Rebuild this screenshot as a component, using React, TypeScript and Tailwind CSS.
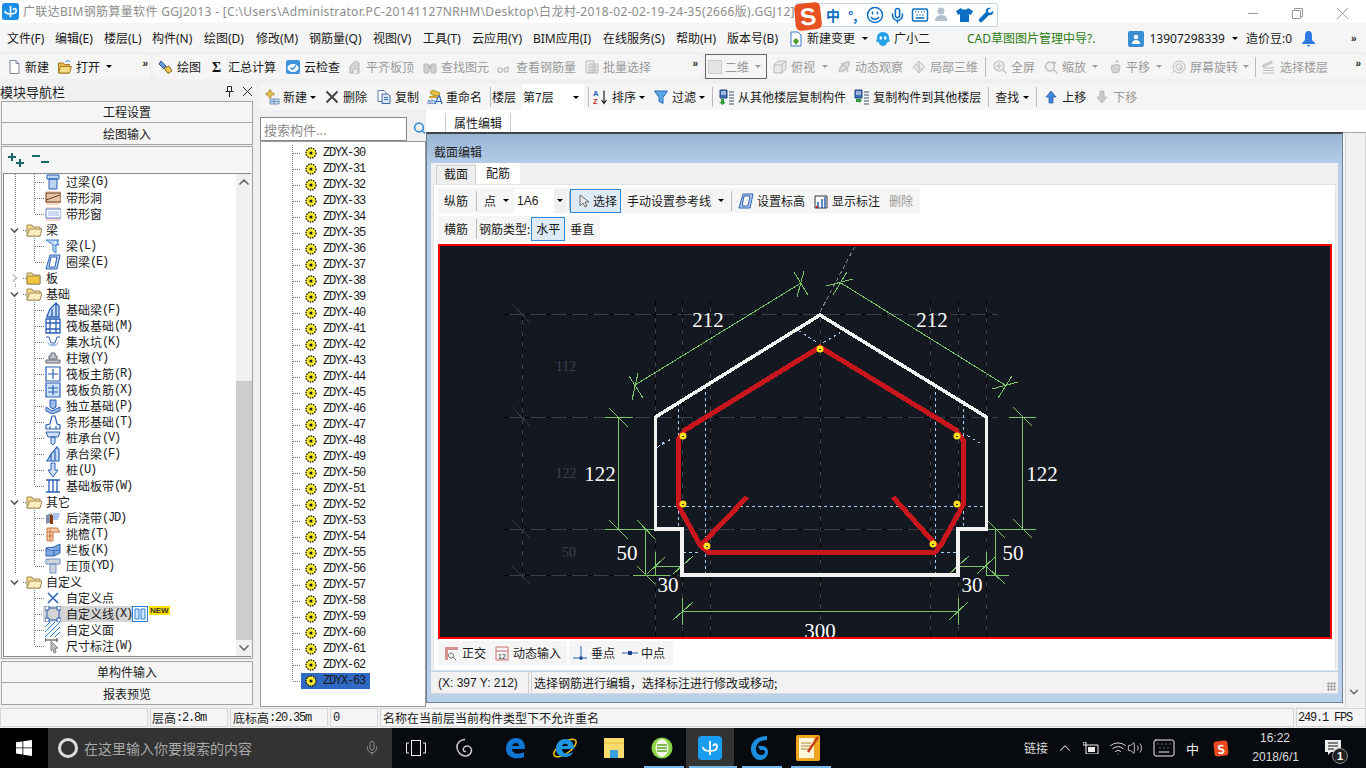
import type { ReactNode } from "react";
import { ChevronDown, ChevronUp, Keyboard, Mic, Volume2, Wifi, Search } from "lucide-react";

// small wrapper for the 16x16 toolbar and tree glyphs
function Ico({ children, className = "" }: { children: ReactNode; className?: string }) {
  return (
    <svg viewBox="0 0 16 16" className={"h-4 w-4 shrink-0 " + className}>
      {children}
    </svg>
  );
}

const BL = "#2a5fb5";
const LB = "#bcd4f2";

const glyphs: Record<string, ReactNode> = {
  // toolbars
  doc: <path d="M4 1.5h6l3 3v10H4z M10 1.5v3h3" fill="#fff" stroke="#7d8a9c" />,
  open: (
    <>
      <path d="M1.5 4h5l1 1.5h5V14h-11z" fill="#e8b84a" stroke="#a17a22" />
      <path d="M3.5 7.5h11L12.5 14h-11z" fill="#f7dc8a" stroke="#a17a22" />
      <path d="M8 3c2-2 4-1.5 5 0" fill="none" stroke="#3a8cd6" />
    </>
  ),
  draw: (
    <>
      <path d="M3 2l5 5-2 3-5-5z" fill="#6b9be0" stroke="#2a4f8f" />
      <path d="M6 9l5-2 3 5-4 2.5z" fill="#e8c65a" stroke="#8a6d1e" />
    </>
  ),
  sigma: <text x="3" y="13" fontSize="14" fontWeight="700" fontFamily="Liberation Serif" fill="#111">Σ</text>,
  cloud: (
    <>
      <rect x="1" y="1" width="14" height="14" rx="2" fill="#3e93de" />
      <ellipse cx="8" cy="9" rx="5.5" ry="4" fill="#fff" />
      <path d="M5.5 8.5l2 2 3.5-4" fill="none" stroke="#3e93de" strokeWidth="1.5" />
    </>
  ),
  grayBlock: (
    <>
      <path d="M3 14V7l6-5 3 2v10z" fill="#d5d5d5" stroke="#b5b5b5" />
      <path d="M6 14v-4h5v4" fill="#eee" stroke="#b5b5b5" />
    </>
  ),
  binoc: (
    <>
      <rect x="2" y="5" width="5" height="9" rx="1.5" fill="#cfcfcf" stroke="#b5b5b5" />
      <rect x="9" y="5" width="5" height="9" rx="1.5" fill="#cfcfcf" stroke="#b5b5b5" />
      <rect x="7" y="6" width="2" height="4" fill="#b5b5b5" />
    </>
  ),
  glasses: <path d="M3 9a2.2 2.2 0 1 0 .1 0M11 7v4a2 2 0 1 1-2-2h2M7 10h1" fill="none" stroke="#bdbdbd" strokeWidth="1.4" />,
  batch: <path d="M2 2h8v12H2zM5 5h9v9H5zM5 8h9M5 11h9M8 5v9M11 5v9" fill="#eee" stroke="#bdbdbd" />,
  cube: <path d="M2 6l4-4h8v8l-4 4H2zM2 6h8v8M10 6l4-4" fill="#e8e8e8" stroke="#bcbcbc" />,
  orbit: <path d="M3 12C5 5 9 2 13 3c1 4-2 8-9 10zM5 4c3 2 6 5 7 9" fill="#ddd" stroke="#bdbdbd" strokeWidth="1.3" />,
  local: <path d="M2 8l6-6 6 6-6 6zM5 5l6 6M8 2v12" fill="#e8e8e8" stroke="#bdbdbd" />,
  zoomAll: <path d="M7 2a5 5 0 1 0 .1 0M11 11l3.5 3.5M7 4v6M4 7h6" fill="#eee" stroke="#bdbdbd" strokeWidth="1.2" />,
  zoomIn: <path d="M7 3a4.5 4.5 0 1 0 .1 0M10.5 10.5l4 4M11 2v4M9 4h4" fill="#f0f0f0" stroke="#bdbdbd" strokeWidth="1.3" />,
  hand: <path d="M4 9l1-3 2 1 1-2 2 1 1-1 2 2-1 6-6 1zM10 1v3M8.5 2.5h3" fill="#d3d3d3" stroke="#bdbdbd" />,
  rotate: <path d="M8 2a6 6 0 1 0 .1 0M8 5a3 3 0 1 0 .1 0M3 12l-2 2M8 8l3 3" fill="#eee" stroke="#bdbdbd" />,
  floorSel: <path d="M2 6l9-4v2L2 8zM2 9h11M2 11.5h11M2 14h11" fill="#ddd" stroke="#bdbdbd" />,
  newCmp: (
    <>
      <path d="M2 4h3V1h2v3h3v2H7v3H5V6H2z" fill="#f3cf4f" stroke="#9c7f1c" strokeWidth=".7" />
      <path d="M6 10h9v5H6zM6 12.5h9M10 10v5" fill="#cfe0f5" stroke="#5d7fae" strokeWidth=".8" />
    </>
  ),
  del: <path d="M2.5 2.5l11 11M13.5 2.5l-11 11" stroke="#444" strokeWidth="2" fill="none" />,
  copy: (
    <>
      <path d="M2 1.5h6l2 2v9H2z" fill="#fff" stroke="#5b7aa8" />
      <path d="M6 5h6l2 2v7.5H6z" fill="#dbe7f7" stroke="#3d68a6" />
      <path d="M8 8.5h4M8 10.5h4" stroke="#3d68a6" />
    </>
  ),
  rename: (
    <>
      <path d="M3 3l3-2 7 3-1 3-7-1z" fill="#e5c13f" stroke="#8a731c" strokeWidth=".7" />
      <path d="M2 7h8v2H2z" fill="#d8a12e" />
      <text x="0" y="15" fontSize="7" fill="#2a5fb5" fontFamily="Liberation Sans">ab</text>
      <path d="M8 15l3.5-8h1l2.5 8M9.5 12.5h4" fill="none" stroke="#2a5fb5" strokeWidth="1.2" />
    </>
  ),
  sortAz: (
    <>
      <text x="0" y="7" fontSize="7.5" fontWeight="700" fill="#2a5fb5" fontFamily="Liberation Sans">A</text>
      <text x="0" y="15" fontSize="7.5" fontWeight="700" fill="#b92e2e" fontFamily="Liberation Sans">Z</text>
      <path d="M11 1.5v12M8.5 11l2.5 3.5 2.5-3.5" fill="none" stroke="#222" strokeWidth="1.2" />
    </>
  ),
  filter: <path d="M1.5 2h13L10 8.5v6L6 12.5v-4z" fill="#5ba7e8" stroke="#2a6fb5" />,
  copyFrom: (
    <>
      <path d="M1 1h7v8H1z" fill="#3f6fb8" stroke="#27497c" />
      <path d="M2 3h5M2 5h5" stroke="#fff" />
      <path d="M2 10h3v3h2l-3.5 3L0 13h2z" fill="#2f9b3c" />
      <path d="M10 3h5M10 6h5M10 9h5M10 12h5M10 15h5" stroke="#7c8796" strokeWidth="1.3" />
    </>
  ),
  copyTo: (
    <>
      <path d="M1 1h7v8H1z" fill="#3f6fb8" stroke="#27497c" />
      <path d="M2 3h5M2 5h5" stroke="#fff" />
      <path d="M2 10h4v3H2zM5 9l3 2.5L5 14z" fill="#2f9b3c" />
      <path d="M10 3h5M10 6h5M10 9h5M10 12h5M10 15h5" stroke="#7c8796" strokeWidth="1.3" />
    </>
  ),
  up: <path d="M8 2l5 6H10v6H6V8H3z" fill="#3f86d8" stroke="#1f5aa8" strokeWidth=".7" />,
  down: <path d="M8 14l5-6H10V2H6v6H3z" fill="#c9c9c9" stroke="#b0b0b0" strokeWidth=".7" />,
  // tree items
  lintel: <path d="M2 1h12v4H2zM4 5h8v10H4z" fill={LB} stroke={BL} />,
  band: (
    <>
      <rect x="1" y="1" width="14" height="14" fill="#f6d9cc" />
      <rect x="1" y="3" width="15" height="9" fill="#e6c3a8" stroke="#6d3a18" />
      <path d="M1 10L15 5" stroke="#6d3a18" />
    </>
  ),
  bandWin: (
    <>
      <rect x="1" y="1" width="14" height="14" fill="#f6d9cc" />
      <rect x="1" y="3" width="15" height="9" fill="#fff" stroke="#5b7fd0" />
      <rect x="3" y="5" width="11" height="5" fill="#cad8f3" />
    </>
  ),
  beam: <path d="M1 2h13l-3 5v8l-3-2V7zM9 7h5L11 2" fill={LB} stroke="#3f86d8" />,
  ring: <path d="M5 1h10l-3 14H1zM6 3l-2 10h6l2-10z" fill={LB} stroke={BL} />,
  fBeam: <path d="M2 14l3-7 6-6 3 3v11H2zM7 7v8M11 2v12" fill="#c5d9f2" stroke={BL} strokeWidth="1.3" />,
  raft: <path d="M1 1h14v14H1zM1 5h14M1 11h14M5 1v14M11 1v14" fill="#fff" stroke={BL} strokeWidth="1.3" />,
  sump: (
    <>
      <path d="M1 3h3l2 6h4l2-6h3" fill="none" stroke={BL} />
      <path d="M2 7c1 7 11 7 12 0l-3 3H5z" fill="#9cbce8" />
    </>
  ),
  pier: <path d="M6 3h4v3h2v3H4V6h2zM1 10h14v3H1z" fill="#c8cbd2" stroke="#5d6470" />,
  rMain: <path d="M1 1h14v14H1zM8 3v10M3 8h10" fill="#fff" stroke={BL} strokeWidth="1.2" />,
  rNeg: <path d="M1 1h14v14H1zM8 3v10M3 6h10M3 10h10" fill="#cfe0f5" stroke={BL} strokeWidth="1.2" />,
  iso: <path d="M1 9l6 4 8-4v4l-8 3-6-3zM5 2h6v7l-3 2-3-2z" fill="#9cbce8" stroke={BL} />,
  strip: <path d="M1 15V11l4-1 2-8h3l2 8 3 1v4zM5 15v-3M11 15v-3" fill="#fff" stroke={BL} strokeWidth="1.2" />,
  capBeam: <path d="M2 15l4-7 6-7 2 3v11zM6 8v7M10 5v10" fill="#c5d9f2" stroke={BL} strokeWidth="1.2" />,
  cap: <path d="M1 2h14l-2 5H3zM6 7h4v6l-2 2-2-2z" fill="#cfe0f5" stroke={BL} />,
  pile: <path d="M6 1h4v7h3l-5 7-5-7h3z" fill="#cfe0f5" stroke={BL} />,
  stripBand: <path d="M1 2h14M1 14h14M4 2v12M8 2v12M12 2v12" fill="none" stroke={BL} strokeWidth="1.3" />,
  pour: (
    <>
      <path d="M1 5l6-2v9l-6 2z" fill="#7e8fa6" />
      <path d="M5 5h3v9H5z" fill="#8a3a10" />
      <path d="M8 3h7l-2 7H8z" fill="#a8c4ea" />
    </>
  ),
  eave: <path d="M2 2h10l3 4H8v9H2zM2 6h6M2 10h6M5 2v13" fill="#f6cfb0" stroke="#c9743a" />,
  parapet: <path d="M1 6l8-1 6-3v9l-6 3H1zM1 6l4 2h10M9 8v6" fill="#7ca8df" stroke={BL} />,
  coping: <path d="M1 1h14v5H1zM5 6h6v9H5z" fill="#cfd3da" stroke="#6d93cc" />,
  cPoint: <path d="M3 3l10 10M13 3L3 13" stroke={BL} strokeWidth="1.5" fill="none" />,
  cLine: (
    <>
      <rect x="2" y="2" width="12" height="12" fill="none" stroke={BL} />
      <path d="M0 0h4v4H0zM12 0h4v4h-4zM0 12h4v4H0zM12 12h4v4h-4z" fill="#fff" stroke={BL} />
    </>
  ),
  cFace: <path d="M0 5L5 0M0 10L10 0M0 15L15 0M5 15L15 5M10 15l5-5" stroke="#2a7fd8" fill="none" />,
  dim: (
    <>
      <path d="M0 2h12M0 0v4M12 0v4" stroke="#333" fill="none" />
      <path d="M6 3l7 7-3 .5 1 4-2 .5-1-4-2 2z" fill="#bbb" stroke="#888" />
    </>
  ),
};

const G = ({ n, className }: { n: string; className?: string }) => <Ico className={className}>{glyphs[n]}</Ico>;

// folder used by the left tree
function Folder({ open }: { open: boolean }) {
  return (
    <Ico>
      <path d="M1 3h5l1 2h7v9H1z" fill="#f6dd8a" stroke="#9d8a5c" />
      {open ? <path d="M3.5 7H16l-2 7H1z" fill="#fbeeb8" stroke="#9d8a5c" /> : <path d="M1 6h13v8H1z" fill="#f2c53d" stroke="#9d8a5c" />}
    </Ico>
  );
}

function Caret({ className = "", gray }: { className?: string; gray?: boolean }) {
  return (
    <span
      className={
        "h-0 w-0 shrink-0 border-x-[3px] border-t-[3px] border-x-transparent " + (gray ? "border-t-[#999] " : "border-t-black ") + className
      }
    />
  );
}

function More({ className = "" }: { className?: string }) {
  return <span className={"font-['Liberation_Sans',sans-serif] text-[10px] font-bold leading-none tracking-[-1px] text-[#222] " + className}>»</span>;
}

function Sep({ className = "" }: { className?: string }) {
  return <span className={"h-5 w-px shrink-0 bg-[#b9b9b9] " + className} />;
}

function Tool({ icon, label, gray, className = "" }: { icon: string; label: string; gray?: boolean; className?: string }) {
  return (
    <span className={"flex shrink-0 items-center gap-[3px] " + className}>
      <G n={icon} />
      <span className={gray ? "text-[#9a9a9a]" : ""}>{label}</span>
    </span>
  );
}

// Latin in the tree is a fixed 6px wide face next to 12px Chinese
function Mono({ children, className = "" }: { children: ReactNode; className?: string }) {
  return <span className={"font-['Liberation_Mono',monospace] tracking-[-1.2px] " + className}>{children}</span>;
}

type Row = { kind: "folder" | "item"; icon?: string; label: string; key?: string; open?: boolean; last?: boolean; rootLine?: boolean; selected?: boolean };

const treeRows: Row[] = [
  { kind: "item", icon: "lintel", label: "过梁", key: "(G)", rootLine: true },
  { kind: "item", icon: "band", label: "带形洞", rootLine: true },
  { kind: "item", icon: "bandWin", label: "带形窗", rootLine: true, last: true },
  { kind: "folder", label: "梁", open: true, rootLine: true },
  { kind: "item", icon: "beam", label: "梁", key: "(L)", rootLine: true },
  { kind: "item", icon: "ring", label: "圈梁", key: "(E)", rootLine: true, last: true },
  { kind: "folder", label: "板", rootLine: true },
  { kind: "folder", label: "基础", open: true, rootLine: true },
  { kind: "item", icon: "fBeam", label: "基础梁", key: "(F)", rootLine: true },
  { kind: "item", icon: "raft", label: "筏板基础", key: "(M)", rootLine: true },
  { kind: "item", icon: "sump", label: "集水坑", key: "(K)", rootLine: true },
  { kind: "item", icon: "pier", label: "柱墩", key: "(Y)", rootLine: true },
  { kind: "item", icon: "rMain", label: "筏板主筋", key: "(R)", rootLine: true },
  { kind: "item", icon: "rNeg", label: "筏板负筋", key: "(X)", rootLine: true },
  { kind: "item", icon: "iso", label: "独立基础", key: "(P)", rootLine: true },
  { kind: "item", icon: "strip", label: "条形基础", key: "(T)", rootLine: true },
  { kind: "item", icon: "cap", label: "桩承台", key: "(V)", rootLine: true },
  { kind: "item", icon: "capBeam", label: "承台梁", key: "(F)", rootLine: true },
  { kind: "item", icon: "pile", label: "桩", key: "(U)", rootLine: true },
  { kind: "item", icon: "stripBand", label: "基础板带", key: "(W)", rootLine: true, last: true },
  { kind: "folder", label: "其它", open: true, rootLine: true },
  { kind: "item", icon: "pour", label: "后浇带", key: "(JD)", rootLine: true },
  { kind: "item", icon: "eave", label: "挑檐", key: "(T)", rootLine: true },
  { kind: "item", icon: "parapet", label: "栏板", key: "(K)", rootLine: true },
  { kind: "item", icon: "coping", label: "压顶", key: "(YD)", rootLine: true, last: true },
  { kind: "folder", label: "自定义", open: true },
  { kind: "item", icon: "cPoint", label: "自定义点" },
  { kind: "item", icon: "cLine", label: "自定义线", key: "(X)", selected: true },
  { kind: "item", icon: "cFace", label: "自定义面" },
  { kind: "item", icon: "dim", label: "尺寸标注", key: "(W)", last: true },
];

function TreeRow({ row }: { row: Row }) {
  if (row.kind === "folder") {
    return (
      <div className="flex h-4 items-center whitespace-nowrap">
        <svg width="22" height="16" className="shrink-0">
          {row.rootLine && <line x1="11.5" y1="0" x2="11.5" y2="16" stroke="#777" strokeDasharray="1 1" />}
          <line x1="15" y1="8.5" x2="22" y2="8.5" stroke="#777" strokeDasharray="1 1" />
          <rect x="5" y="2" width="14" height="12" fill="#fff" />
          {row.open ? (
            <path d="M7 6.5l3.500 3.500L14 6.500" fill="none" stroke="#555" strokeWidth="1.6" />
          ) : (
            <path d="M9 4.5l3.500 3.500L9 11.500" fill="none" stroke="#bbb" strokeWidth="1.6" />
          )}
        </svg>
        <Folder open={!!row.open} />
        <span className="ml-[4px]">{row.label}</span>
      </div>
    );
  }
  return (
    <div className="flex h-4 items-center whitespace-nowrap">
      <svg width="41" height="16" className="shrink-0">
        {row.rootLine && <line x1="11.5" y1="0" x2="11.5" y2="16" stroke="#777" strokeDasharray="1 1" />}
        <line x1="30.5" y1="0" x2="30.5" y2={row.last ? 8 : 16} stroke="#777" strokeDasharray="1 1" />
        <line x1="31" y1="8.5" x2="41" y2="8.5" stroke="#777" strokeDasharray="1 1" />
      </svg>
      {row.selected ? (
        <>
          <span className="-ml-[2px] flex h-4 w-[89px] shrink-0 items-center bg-[#d4d4d4] pl-[2px]">
            <G n={row.icon!} />
            <span className="ml-[5px]">{row.label}</span>
            <Mono>{row.key}</Mono>
          </span>
          <Ico>
            <rect x=".5" y=".5" width="15" height="15" fill="#fff" stroke="#2a7fd8" />
            <path d="M3 3h4v10H3zM9 3h4v10H9z" fill="#cfe2fa" stroke="#2a7fd8" />
          </Ico>
          <span className="-mt-[8px] ml-[1px] bg-[#ffe100] px-[1px] font-['Liberation_Sans',sans-serif] text-[8px] font-bold leading-[9px] text-[#333]">NEW</span>
        </>
      ) : (
        <>
          <G n={row.icon!} />
          <span className="ml-[5px]">{row.label}</span>
          {row.key && <Mono>{row.key}</Mono>}
        </>
      )}
    </div>
  );
}

function Gear() {
  return (
    <svg viewBox="0 0 12 12" className="h-[12px] w-[12px] shrink-0">
      <circle cx="6" cy="6" r="5" fill="#f7ec2e" stroke="#1a1a1a" strokeWidth="1.4" strokeDasharray="1.5 1" />
      <circle cx="6" cy="6" r="1.6" fill="#1a1a1a" />
    </svg>
  );
}

function CmpRow({ n, last }: { n: number; last?: boolean }) {
  return (
    <div className="flex h-4 items-center">
      <svg width="40" height="16" className="shrink-0">
        <line x1="31.5" y1="0" x2="31.5" y2={last ? 8 : 16} stroke="#777" strokeDasharray="1 1" />
        <line x1="32" y1="8.5" x2="40" y2="8.5" stroke="#777" strokeDasharray="1 1" />
      </svg>
      <span className={"flex h-4 w-[69px] items-center pl-[4px] " + (last ? "bg-[#316ac5]" : "")}>
        <Gear />
        <Mono className="ml-[6px]">ZDYX-{n}</Mono>
      </span>
    </div>
  );
}

// section drawing, in page pixels through the viewBox
const GREEN = "#7cc46a";
const greenLines: number[][] = [
  [635, 385, 801, 283], [638, 373, 632, 400], [629, 376, 643, 398], [804, 271, 797, 297], [794, 272, 808, 295],
  [841, 283, 1005, 385], [826, 286, 853, 279], [847, 272, 833, 295], [992, 389, 1018, 382], [1012, 376, 998, 398],
  [618.5, 417, 618.5, 529], [605, 417, 633, 417], [609, 408, 628, 427], [605, 529, 660, 529], [609, 520, 628, 539],
  [645.5, 529, 645.5, 575], [637, 520, 655, 539], [633, 575, 670, 575], [637, 566, 655, 584],
  [655, 566, 682, 566], [655, 552, 655, 575], [647, 574, 665, 557], [682, 552, 682, 575], [673, 574, 693, 556],
  [682, 611, 958, 611], [682, 598, 682, 625], [673, 620, 693, 602], [958, 598, 958, 625], [949, 620, 968, 602],
  [1022.5, 417, 1022.5, 529], [1009, 417, 1036, 417], [1013, 407, 1032, 426], [981, 529, 1036, 529], [1013, 519, 1032, 538], [986, 519, 1005, 538],
  [995.5, 529, 995.5, 575], [986, 575, 1009, 575], [986, 566, 1005, 584],
  [958, 566, 986, 566], [958, 552, 958, 575], [949, 574, 969, 556], [986, 552, 986, 575], [977, 574, 995, 557],
];
const gridH: number[][] = [
  [504, 314, 998], [504, 417, 998], [504, 529, 998], [504, 575, 682],
];
const gridV: number[][] = [
  [521.5, 314, 578], [655, 301, 640], [682, 301, 640], [710, 301, 640], [820, 312, 640], [930, 301, 640], [958, 301, 640], [986, 301, 640],
];
const dimTicks: number[][] = [
  [512, 304, 530, 323], [512, 407, 530, 426], [512, 520, 530, 538], [512, 566, 530, 584],
];
const blueDash: number[][] = [
  [655, 506, 985, 506], [678, 402, 678, 530], [705, 385, 705, 575], [935, 385, 935, 575], [963, 402, 963, 530],
  [682, 552, 700, 552], [940, 552, 958, 552], [798, 330, 818, 343], [823, 342, 840, 332], [967, 435, 982, 444], [662, 444, 673, 437], [657, 447, 665, 440],
];
const points = [[683, 436], [820, 349], [957, 436], [683, 504], [957, 504], [707, 546], [933, 544]];
const bigLabels: [string, number, number][] = [
  ["212", 708, 327], ["212", 932, 327], ["122", 600, 481], ["122", 1042, 481], ["50", 627, 560], ["50", 1013, 560], ["30", 668, 592], ["30", 972, 592], ["300", 820, 638],
];
const dimLabels: [string, number, number][] = [["112", 566, 371], ["122", 566, 478], ["50", 569, 557]];

function SectionCanvas() {
  return (
    <svg viewBox="440 246 890 391" className="h-full w-full" shapeRendering="crispEdges">
      {gridH.map(([x1, y, x2]) => (
        <g key={`${x1}-${y}`}>
          <line x1={x1} y1={y + 0.5} x2={x2} y2={y + 0.5} stroke="#383f4b" />
          <line x1={x1} y1={y + 0.5} x2={x2} y2={y + 0.5} stroke="#000" strokeDasharray="5 16" />
        </g>
      ))}
      {gridV.map(([x, y1, y2]) => (
        <g key={x}>
          <line x1={x + 0.5} y1={y1} x2={x + 0.5} y2={y2} stroke="#3a414d" />
          <line x1={x + 0.5} y1={y1} x2={x + 0.5} y2={y2} stroke="#000" strokeDasharray="6 5" />
        </g>
      ))}
      {dimTicks.map(([a, b, c, d]) => (
        <line key={`${a}${b}`} x1={a} y1={b} x2={c} y2={d} stroke="#30363f" />
      ))}
      {blueDash.map(([a, b, c, d], i) => (
        <line key={i} x1={a + 0.5} y1={b + 0.5} x2={c + 0.5} y2={d + 0.5} stroke="#a9cdf2" strokeDasharray="3 3" />
      ))}
      <line x1="820" y1="312" x2="855" y2="246" stroke="#7a7f87" strokeDasharray="4 3" />
      {greenLines.map(([a, b, c, d], i) => (
        <line key={i} x1={a} y1={b} x2={c} y2={d} stroke={GREEN} />
      ))}
      <path d="M655.5 529V417L820 315l166.5 102v112H958v46H682v-46z" fill="none" stroke="#f2f2f2" strokeWidth="3.5" />
      <path
        d="M678 505V440l7-10L820 347 956 430l7 10v65l-22 40-6 7H708l-8-7z M747 497l-45 47 M893 497l44 49"
        fill="none"
        stroke="#c9161d"
        strokeWidth="5"
      />
      {points.map(([x, y]) => (
        <g key={`${x}${y}`}>
          <circle cx={x} cy={y} r="3.5" fill="#ffe020" shapeRendering="auto" />
          <rect x={x - 1} y={y} width="2" height="1" fill="#333" />
        </g>
      ))}
      <g fontFamily="'Liberation Serif',serif" textAnchor="middle" shapeRendering="auto">
        {bigLabels.map(([t, x, y]) => (
          <text key={`${x}${y}`} x={x} y={y} fontSize="21" fill="#fff">
            {t}
          </text>
        ))}
        {dimLabels.map(([t, x, y]) => (
          <text key={`${x}${y}`} x={x} y={y} fontSize="14" fill="#3b4250">
            {t}
          </text>
        ))}
      </g>
    </svg>
  );
}

function BlueBtn({ children, className = "" }: { children: ReactNode; className?: string }) {
  return <span className={"flex h-[24px] shrink-0 items-center border border-[#2c8ad8] bg-[#deeaf6] " + className}>{children}</span>;
}

function Dialog() {
  return (
    <div className="absolute left-[426px] top-[132px] flex h-[571px] w-[917px] flex-col border-x border-b border-t-2 border-x-[#6f8295] border-b-[#6f8295] border-t-[#444] bg-gradient-to-b from-[#97b5d4] from-0% to-[#b9d1ea] to-[6%]">
      <div className="flex h-[29px] shrink-0 items-end pb-[5px] pl-[7px] text-[#222]">截面编辑</div>
      {/* tabs */}
      <div className="mx-[4px] flex h-[21px] shrink-0 items-end bg-[#f0f0f0] pl-[5px]">
        <span className="flex h-[19px] w-[40px] items-center justify-center border-x border-t border-[#cfcfcf] bg-[#f0f0f0] pb-[2px]">截面</span>
        <span className="flex h-[21px] w-[44px] items-center justify-center bg-white pb-[1px]">配筋</span>
      </div>
      <div className="mx-[4px] flex flex-1 flex-col bg-[#f0f0f0]">
        <div className="mx-[2px] flex flex-1 flex-col border border-[#e3e3e3] bg-white pl-[4px] pr-[1px] pt-[3px]">
          {/* rebar toolbar */}
          <div className="flex h-[25px] w-[482px] shrink-0 items-center bg-[#f5f5f5] pl-[6px] text-[12px]">
            <span>纵筋</span>
            <Sep className="ml-[8px]" />
            <span className="ml-[7px]">点</span>
            <Caret className="ml-[7px]" />
            <span className="ml-[5px] flex h-[24px] w-[52px] items-center bg-white pl-[3px] font-['Liberation_Sans',sans-serif]">
              1A6
              <span className="ml-auto flex h-full w-[12px] items-center justify-center bg-[#f0f0f0]">
                <Caret />
              </span>
            </span>
            <Sep className="ml-[3px]" />
            <BlueBtn className="ml-0 w-[51px] pl-[5px]">
              <Ico>
                <path d="M4 2v11l3-3 2 4 2-1-2-4h4z" fill="#eee" stroke="#666" />
              </Ico>
              <span className="ml-[1px]">选择</span>
            </BlueBtn>
            <span className="ml-[6px]">手动设置参考线</span>
            <Caret className="ml-[7px]" />
            <Sep className="ml-[7px]" />
            <Tool icon="ring" label="设置标高" className="ml-[6px]" />
            <span className="ml-[8px] flex items-center gap-[3px]">
              <Ico>
                <path d="M2 3h12v12H2z" fill="#fff" stroke="#333" />
                <path d="M5 15V9M9 15V6M12 15V4" stroke="#2a5fb5" strokeWidth="1.5" />
                <path d="M3 13h2v2H3z" fill="#c9161d" />
              </Ico>
              显示标注
            </span>
            <span className="ml-[9px] text-[#9a9a9a]">删除</span>
          </div>
          <div className="mt-[3px] flex h-[25px] w-[162px] shrink-0 items-center bg-[#f5f5f5] pl-[6px] text-[12px]">
            <span>横筋</span>
            <Sep className="ml-[8px]" />
            <span className="ml-[2px]">钢筋类型:</span>
            <BlueBtn className="ml-[1px] w-[34px] justify-center">水平</BlueBtn>
            <span className="ml-[5px]">垂直</span>
          </div>
          {/* drawing area */}
          <div className="mt-[3px] h-[395px] w-[894px] shrink-0 border-2 border-[#f00] bg-[#141821]">
            <SectionCanvas />
          </div>
          {/* snap toolbar */}
          <div className="mt-[2px] flex h-[24px] shrink-0 items-center text-[12px]">
            <div className="flex h-full w-[129px] items-center bg-[#f5f5f5] pl-[5px]">
              <span className="flex items-center gap-[3px]">
                <Ico>
                  <path d="M2 2h13v3H5v10H2z" fill="#d99090" />
                  <path d="M8 8a2.500 2.500 0 1 0 .1 0M10 12l3 3" fill="none" stroke="#666" />
                </Ico>
                正交
              </span>
              <span className="ml-[8px] flex items-center gap-[3px]">
                <Ico>
                  <path d="M2 2h12M2 2v13h12V2M2 6h12" fill="none" stroke="#c96e6e" />
                  <text x="4" y="14" fontSize="7" fill="#222" fontFamily="Liberation Sans">12</text>
                </Ico>
                动态输入
              </span>
            </div>
            <div className="ml-[2px] flex h-full w-[104px] items-center bg-[#f5f5f5] pl-[3px]">
              <span className="flex items-center gap-[3px]">
                <Ico>
                  <path d="M9 1v14M1 13h14" stroke="#2a5fb5" fill="none" />
                  <rect x="7.5" y="11.5" width="3" height="3" fill="#1d3f86" />
                </Ico>
                垂点
              </span>
              <span className="ml-[7px] flex items-center gap-[3px]">
                <Ico>
                  <path d="M0 8h16" stroke="#2a5fb5" />
                  <rect x="6" y="6" width="4" height="4" fill="#1d3f86" />
                </Ico>
                中点
              </span>
            </div>
          </div>
        </div>
      </div>
      {/* dialog status line */}
      <div className="mx-[4px] mt-[1px] flex h-[22px] shrink-0 gap-[2px] border-b border-[#d8d8d8] bg-[#f2f2f2] text-[12px]">
        <span className="flex w-[98px] items-center border-r border-[#d0d0d0] pl-[7px] font-['Liberation_Sans',sans-serif]">(X: 397 Y: 212)</span>
        <span className="relative flex flex-1 items-center border-l border-[#d0d0d0] pl-[2px]">
          选择钢筋进行编辑，选择标注进行修改或移动;
          <span className="absolute bottom-[2px] right-[2px] h-[9px] w-[9px] bg-[radial-gradient(#aaa_1px,transparent_1.5px)] bg-[length:3px_3px]" />
        </span>
      </div>
      <div className="h-[8px] shrink-0" />
    </div>
  );
}

function Taskbar() {
  const underline = "absolute bottom-0 h-[2px] bg-[#76b9ed] ";
  return (
    <div className="relative flex h-10 shrink-0 items-center bg-[#070b10] text-white">
      <div className="flex h-full w-[48px] items-center justify-center bg-black">
        <svg viewBox="0 0 16 16" className="h-4 w-4">
          <path d="M0 2.300l6.500-.9V7.500H0zM7.300 1.300L16 0v7.500H7.300zM0 8.300h6.500v6.200L0 13.600zM7.300 8.300H16V16l-8.700-1.200z" fill="#fff" />
        </svg>
      </div>
      <div className="flex h-full w-[344px] items-center bg-[#333] pl-[10px] text-[14px] text-[#a8a8a8]">
        <span className="h-[20px] w-[20px] rounded-full border-[3px] border-[#ddd]" />
        <span className="ml-[6px]">在这里输入你要搜索的内容</span>
        <Mic className="ml-auto mr-[12px] h-4 w-4 text-[#999]" strokeWidth={1.3} />
      </div>
      {/* task view */}
      <div className="flex w-[48px] justify-center">
        <svg width="20" height="16" viewBox="0 0 20 16" fill="none" stroke="#eee">
          <rect x="5.5" y=".5" width="9" height="15" />
          <path d="M3 3H.5v10H3M17 3h2.500v10H17" />
        </svg>
      </div>
      <div className="flex w-[49px] justify-center">
        <svg width="20" height="20" viewBox="0 0 20 20" fill="none" stroke="#ccc" strokeWidth="1.5">
          <path d="M10 1.500c-5 0-8.500 4-8 8.500s5 8.500 9 8c3.500-.5 6-3.500 5.500-6.500S12 7 9.500 9s-1 5 1.500 4.500" />
        </svg>
      </div>
      <div className="flex w-[51px] justify-center">
        <svg width="22" height="22" viewBox="0 0 22 22">
          <path d="M2 12C2 5 7 1 12 1c6 0 9 4 9 11H8c0 5 7 6 12 3v5c-7 3-18 1-18-8zM8 9h7c0-4-6-4-7 0z" fill="#0f78d4" />
        </svg>
      </div>
      <div className="flex w-[50px] justify-center">
        <svg width="26" height="26" viewBox="0 0 26 26">
          <ellipse cx="13" cy="13" rx="13" ry="5.5" transform="rotate(-35 13 13)" fill="none" stroke="#f0c419" strokeWidth="1.5" />
          <path d="M4 14C4 8 8 4 13 4c6 0 9 4 9 10H10c0 5 6 6 11 3-1 3-4 5-8 5-5 0-9-3-9-8zM10 11h6c0-3-5-3-6 0z" fill="#1f95e0" />
        </svg>
      </div>
      <div className="flex w-[47px] justify-center">
        <svg width="22" height="20" viewBox="0 0 22 20">
          <path d="M1 0h20v20H1z" fill="#fbdc6c" />
          <path d="M1 5h20" stroke="#e9b93c" />
          <path d="M7 12h8v8H7z" fill="#3aa1e0" />
        </svg>
      </div>
      <div className="flex w-[49px] justify-center">
        <svg width="22" height="26" viewBox="0 0 22 26">
          <circle cx="11" cy="13" r="10.5" fill="#8bd446" />
          <ellipse cx="11" cy="13" rx="6.5" ry="9" fill="#f2f8e8" />
          <path d="M6 10h10M6 13h10M6 16h10" stroke="#5aa12a" strokeWidth="1.5" />
        </svg>
      </div>
      <div className="flex h-full w-[48px] items-center justify-center bg-[#333]">
        <span className="flex h-[24px] w-[24px] items-center justify-center rounded-[4px] bg-[#1a9cf0]">
          <svg width="16" height="16" viewBox="0 0 16 16" fill="none" stroke="#fff" strokeWidth="1.8">
            <path d="M8 1v14M1 7c0 4 4 4 7 4s7 0 7-4-3-3-4-1" />
          </svg>
        </span>
      </div>
      <div className="flex w-[50px] justify-center">
        <svg width="24" height="26" viewBox="0 0 24 26">
          <path d="M20 1c-9 0-16 5-16 13 0 6 4 11 9 11 5 0 8-4 8-8s-3-6-6-6h-4l2 4h3c1 0 2 1 2 2s-1 3-4 3-5-3-5-6c0-6 5-9 11-9z" fill="#1a8fe0" />
        </svg>
      </div>
      <div className="flex w-[48px] justify-center">
        <svg width="24" height="26" viewBox="0 0 24 26">
          <rect x="0" y="0" width="24" height="26" rx="2" fill="#f2a51f" />
          <rect x="3" y="3" width="15" height="20" fill="#fdf6da" />
          <path d="M5 8h10M5 11h10M5 14h10" stroke="#b08a3a" />
          <path d="M22 2L12 17" stroke="#c9401d" strokeWidth="2.5" />
        </svg>
      </div>
      <span className={underline + "left-[644px] w-[40px]"} />
      <span className={underline + "left-[689px] w-[48px]"} />
      <span className={underline + "left-[742px] w-[40px]"} />
      <span className={underline + "left-[791px] w-[40px]"} />
      {/* tray */}
      <span className="ml-[192px] text-[12px] text-[#ddd]">链接</span>
      <ChevronUp className="ml-[8px] h-[18px] w-[18px] text-[#ddd]" strokeWidth={1.4} />
      <svg width="16" height="12" viewBox="0 0 16 12" className="ml-[9px]">
        <path d="M0 0h3v3H0zM3 3h12v9H3z" fill="none" stroke="#eee" />
        <path d="M5 5h7v5H5z" fill="#eee" />
      </svg>
      <Wifi className="ml-[10px] h-[18px] w-[18px] text-[#ddd]" strokeWidth={1.3} />
      <Volume2 className="ml-0 h-[16px] w-[16px] text-[#ddd]" strokeWidth={1.3} />
      <Keyboard className="ml-[9px] h-[24px] w-[24px] text-[#eee]" strokeWidth={1} />
      <span className="ml-[10px] text-[13px] text-[#eee]">中</span>
      <span className="ml-[15px] flex h-[15px] w-[14px] -rotate-6 items-center justify-center rounded-[3px] bg-[#e8491d] text-[12px] font-bold leading-none">S</span>
      <div className="ml-[19px] flex w-[52px] flex-col items-end text-[#ddd]">
        <span className="mr-[9px] font-['Liberation_Sans',sans-serif] text-[12px] leading-[19px]">16:22</span>
        <span className="font-['Liberation_Sans',sans-serif] text-[12px] leading-[19px]">2018/6/1</span>
      </div>
      <div className="relative ml-[26px]">
        <svg width="16" height="16" viewBox="0 0 16 16">
          <path d="M0 0h16v12H6l-3 3v-3H0z" fill="#eee" />
          <path d="M3 3h10M3 6h10M3 9h6" stroke="#111" />
        </svg>
        <span className="absolute left-[7px] top-[8px] flex h-[16px] w-[16px] items-center justify-center rounded-full border border-[#888] bg-[#222] font-['Liberation_Sans',sans-serif] text-[11px] font-bold leading-none">1</span>
      </div>
    </div>
  );
}

export default function App() {
  return (
    <div className="relative flex h-[768px] w-[1366px] flex-col overflow-hidden bg-[#f0f0f0] font-['Noto_Sans_CJK_SC','Noto_Sans',sans-serif] text-[12px] leading-none text-[#1a1a1a]">
      {/* title bar */}
      <div className="flex h-[23px] shrink-0 items-center bg-white">
        <span className="ml-[2px] flex h-[17px] w-[17px] items-center justify-center rounded-[3px] bg-[#1a8de8]">
          <svg width="13" height="13" viewBox="0 0 16 16" fill="none" stroke="#fff" strokeWidth="2">
            <path d="M8 1v14M1 7c0 4 4 4 7 4s7 0 7-4-3-3-4-1" />
          </svg>
        </span>
        <span className="ml-[4px] whitespace-nowrap font-['Noto_Sans','Noto_Sans_CJK_SC',sans-serif] tracking-[0.33px] text-[#8c8c8c]">
          广联达BIM钢筋算量软件 GGJ2013 - [C:\Users\Administrator.PC-20141127NRHM\Desktop\白龙村-2018-02-02-19-24-35(2666版).GGJ12]
        </span>
      </div>
      {/* window buttons */}
      <div className="absolute right-[18px] top-[8px] flex items-center gap-[34px] text-[#777]">
        <span className="h-px w-[10px] bg-[#999]" />
        <svg width="11" height="11" viewBox="0 0 11 11" fill="none" stroke="#999">
          <path d="M.5 2.500h8v8h-8zM2.500 2.500v-2h8v8h-2" />
        </svg>
        <svg width="11" height="11" viewBox="0 0 11 11" stroke="#999">
          <path d="M0 0l11 11M11 0L0 11" />
        </svg>
      </div>
      {/* input method bar */}
      <div className="absolute left-[795px] top-[3px] flex h-[24px] w-[203px] items-center rounded-[2px] border border-[#c5d4e4] bg-white pl-[30px] text-[#0d6fc4]">
        <span className="absolute -left-[1px] -top-[1px] flex h-[27px] w-[26px] -rotate-6 items-center justify-center rounded-[5px] bg-[#e9501f] font-['Liberation_Sans',sans-serif] text-[24px] font-bold text-white">S</span>
        <span className="text-[14px] font-bold">中</span>
        <span className="ml-[8px] text-[13px] font-bold">°,</span>
        <svg width="18" height="18" viewBox="0 0 18 18" fill="none" stroke="#0d6fc4" strokeWidth="1.5" className="ml-[9px]">
          <circle cx="9" cy="9" r="7.5" />
          <path d="M6.500 5.500v3M11.500 5.500v3M5 11c2 3 6 3 8 0" />
        </svg>
        <Mic className="ml-[5px] h-[17px] w-[17px]" strokeWidth={2.2} />
        <Keyboard className="ml-[5px] h-[18px] w-[18px]" strokeWidth={2} />
        <svg width="18" height="18" viewBox="0 0 18 18" className="ml-[5px]" fill="#b4c0cc">
          <circle cx="7" cy="5" r="3.5" />
          <path d="M1 15c0-4 3-6 6-6s5 1 6 3v3z" />
        </svg>
        <svg width="17" height="16" viewBox="0 0 17 16" className="ml-[4px]" fill="#0d6fc4">
          <path d="M5 1L0 4l2 4 2-1v8h9V7l2 1 2-4-5-3c-1 2-6 2-7 0z" />
        </svg>
        <svg width="16" height="16" viewBox="0 0 16 16" className="ml-[5px]" fill="#0d6fc4">
          <path d="M15 4l-3 2-2-1 0-2 3-2c-3-1-6 1-5 4L1 12c-1 2 1 4 3 3l7-7c3 1 5-2 4-4z" />
        </svg>
      </div>
      {/* menu */}
      <div className="flex h-[29px] shrink-0 items-center bg-[#f5f5f5] pl-[7px] pt-[2px] font-['Noto_Sans','Noto_Sans_CJK_SC',sans-serif]">
        <span className="w-[48px]">文件(F)</span>
        <span className="w-[49px]">编辑(E)</span>
        <span className="w-[48px]">楼层(L)</span>
        <span className="w-[52px]">构件(N)</span>
        <span className="w-[52px]">绘图(D)</span>
        <span className="w-[53px]">修改(M)</span>
        <span className="w-[64px]">钢筋量(Q)</span>
        <span className="w-[50px]">视图(V)</span>
        <span className="w-[49px]">工具(T)</span>
        <span className="w-[61px]">云应用(Y)</span>
        <span className="w-[70px]">BIM应用(I)</span>
        <span className="w-[73px]">在线服务(S)</span>
        <span className="w-[51px]">帮助(H)</span>
        <span className="w-[61px]">版本号(B)</span>
        <span className="flex items-center gap-[3px]">
          <Ico>
            <path d="M3 1h7l3 3v11H3z" fill="#fff" stroke="#3d7ac9" />
            <path d="M5 10l3-3 3 3-3 4z" fill="#4c9b2f" />
          </Ico>
          新建变更
        </span>
        <Caret className="ml-[7px]" />
        <span className="ml-[7px] flex items-center gap-[3px]">
          <Ico>
            <path d="M8 1c4 0 6.500 3 6 7 1 1 1 3 0 3l-1-.5C12 13 10 15 8 15s-4-2-5-4.500L2 11c-1 0-1-2 0-3-.5-4 2-7 6-7z" fill="#27a0ea" />
            <ellipse cx="5.8" cy="7" rx="1.3" ry="1.8" fill="#fff" />
            <ellipse cx="10.2" cy="7" rx="1.3" ry="1.8" fill="#fff" />
          </Ico>
          广小二
        </span>
        <span className="ml-[37px] text-[#2d7d12]">CAD草图图片管理中导?.</span>
        <span className="ml-[33px] flex items-center gap-[5px]">
          <span className="flex h-4 w-4 items-center justify-center rounded-[2px] bg-[#3b8fd0]">
            <svg width="10" height="10" viewBox="0 0 10 10" fill="#fff">
              <circle cx="5" cy="3" r="2.3" />
              <path d="M1 10c0-3 2-4 4-4s4 1 4 4z" />
            </svg>
          </span>
          13907298339
        </span>
        <Caret className="ml-[7px]" />
        <span className="ml-[8px]">造价豆:0</span>
        <svg width="13" height="16" viewBox="0 0 13 16" fill="#2f7ae0" className="ml-[10px]">
          <path d="M6.500 0c2.500 0 3.500 2 3.500 4.500V9l3 3v1H0v-1l3-3V4.500C3 2 4 0 6.500 0zM5 14h3c0 2-3 2-3 0z" />
        </svg>
        <More className="ml-[36px]" />
      </div>
      {/* standard toolbar */}
      <div className="flex h-[31px] shrink-0 items-start pt-[2px]">
        <div className="flex h-[25px] w-[150px] shrink-0 items-center rounded-sm bg-[#f5f5f5] pl-[6px]">
          <Tool icon="doc" label="新建" />
          <Tool icon="open" label="打开" className="ml-[8px]" />
          <Caret className="ml-[6px]" />
          <More className="ml-auto mb-[6px] mr-[3px]" />
        </div>
        <div className="ml-[3px] flex h-[25px] w-[550px] shrink-0 items-center rounded-sm bg-[#f5f5f5] pl-[5px]">
          <Tool icon="draw" label="绘图" />
          <Tool icon="sigma" label="汇总计算" className="ml-[8px]" />
          <Tool icon="cloud" label="云检查" className="ml-[9px]" />
          <Tool icon="grayBlock" label="平齐板顶" gray className="ml-[7px]" />
          <Tool icon="binoc" label="查找图元" gray className="ml-[8px]" />
          <Tool icon="glasses" label="查看钢筋量" gray className="ml-[8px]" />
          <Tool icon="batch" label="批量选择" gray className="ml-[8px]" />
          <More className="ml-auto mb-[6px] mr-[6px]" />
        </div>
        <div className="ml-[2px] flex h-[25px] flex-1 items-center rounded-sm bg-[#f5f5f5]">
          <span className="flex h-[25px] w-[62px] shrink-0 items-center border border-[#666] pl-[2px] text-[#9a9a9a]">
            <span className="h-[14px] w-[14px] border border-[#ccc] bg-[#e4e4e4]" />
            <span className="ml-[3px]">二维</span>
            <Caret gray className="ml-[6px]" />
          </span>
          <Tool icon="cube" label="俯视" gray className="ml-[5px]" />
          <Caret gray className="ml-[7px]" />
          <Tool icon="orbit" label="动态观察" gray className="ml-[8px]" />
          <Tool icon="local" label="局部三维" gray className="ml-[8px]" />
          <Sep className="ml-[7px]" />
          <Tool icon="zoomAll" label="全屏" gray className="ml-[6px]" />
          <Tool icon="zoomIn" label="缩放" gray className="ml-[8px]" />
          <Caret gray className="ml-[6px]" />
          <Tool icon="hand" label="平移" gray className="ml-[9px]" />
          <Caret gray className="ml-[6px]" />
          <Tool icon="rotate" label="屏幕旋转" gray className="ml-[9px]" />
          <Caret gray className="ml-[5px]" />
          <Sep className="ml-[6px]" />
          <Tool icon="floorSel" label="选择楼层" gray className="ml-[5px]" />
          <More className="ml-auto mb-[6px] mr-[6px]" />
        </div>
      </div>

      <div className="flex min-h-0 flex-1">
        {/* navigation column */}
        <div className="flex w-[254px] shrink-0 flex-col">
          <div className="flex h-[16px] shrink-0 items-center text-[13px]">
            模块导航栏
            <svg width="9" height="11" viewBox="0 0 9 11" className="ml-[160px]" stroke="#222" fill="none">
              <path d="M2.500.5h4v5h-4zM.5 5.500h8M4.500 5.500V11" />
            </svg>
            <svg width="9" height="9" viewBox="0 0 9 9" className="ml-[9px]" stroke="#333">
              <path d="M0 0l9 9M9 0L0 9" />
            </svg>
          </div>
          <button className="mx-[1px] mt-[2px] h-[22px] shrink-0 border border-[#a5a5a5] bg-[#f5f5f5]">工程设置</button>
          <button className="mx-[1px] h-[22px] shrink-0 border border-[#a5a5a5] border-t-0 bg-[#f5f5f5]">绘图输入</button>
          <div className="ml-[1px] mr-[1px] mt-[1px] flex min-h-0 flex-1 flex-col border border-[#a5a5a5] bg-[#f0f0f0]">
            <div className="flex h-[26px] shrink-0 items-center bg-[#f6f6f6] pl-[6px]">
              <svg width="42" height="16" viewBox="0 0 42 16" fill="#166a63">
                <path d="M3 1h2v3h3v2H5v3H3V6H0V4h3zM11 7h2v3h3v2h-3v3h-2v-3H8v-2h3zM24 3h8v2h-8zM33 9h8v2h-8z" />
              </svg>
            </div>
            <div className="mx-[1px] mb-[1px] flex min-h-0 flex-1 border border-[#8a8a8a] bg-white">
              <div className="w-[232px] shrink-0 overflow-hidden">
                {treeRows.map((r, i) => (
                  <TreeRow key={i} row={r} />
                ))}
              </div>
              <div className="flex w-[16px] shrink-0 flex-col bg-[#f0f0f0]">
                <ChevronUp className="h-[16px] w-[16px] text-[#666]" strokeWidth={2.5} />
                <div className="h-[191px]" />
                <div className="flex-1 bg-[#cdcdcd]" />
                <ChevronDown className="h-[16px] w-[16px] text-[#666]" strokeWidth={2.5} />
              </div>
            </div>
          </div>
          <button className="mx-[1px] mt-[2px] h-[22px] shrink-0 border border-[#a5a5a5] bg-[#f5f5f5]">单构件输入</button>
          <button className="mx-[1px] mb-[2px] h-[22px] shrink-0 border border-[#a5a5a5] border-t-0 bg-[#f5f5f5]">报表预览</button>
        </div>
        {/* work column */}
        <div className="ml-[6px] flex min-w-0 flex-1 flex-col">
          <div className="mt-[1px] flex h-[26px] shrink-0 items-center bg-[#f5f5f5] pl-[4px]">
            <Tool icon="newCmp" label="新建" />
            <Caret className="ml-[3px]" />
            <Tool icon="del" label="删除" className="ml-[8px]" />
            <Tool icon="copy" label="复制" className="ml-[9px]" />
            <Tool icon="rename" label="重命名" className="ml-[8px]" />
            <Sep className="ml-[8px]" />
            <span className="ml-[1px]">楼层</span>
            <span className="ml-[6px] flex h-[26px] w-[62px] shrink-0 items-center bg-white pl-[1px]">
              第7层
              <Caret className="ml-auto mr-[5px]" />
            </span>
            <Sep className="ml-[4px]" />
            <Tool icon="sortAz" label="排序" className="ml-[4px]" />
            <Caret className="ml-[3px]" />
            <Tool icon="filter" label="过滤" className="ml-[8px]" />
            <Caret className="ml-[3px]" />
            <Sep className="ml-[7px]" />
            <Tool icon="copyFrom" label="从其他楼层复制构件" className="ml-[6px]" />
            <Tool icon="copyTo" label="复制构件到其他楼层" className="ml-[8px]" />
            <Sep className="ml-[7px]" />
            <span className="ml-[6px]">查找</span>
            <Caret className="ml-[4px]" />
            <Sep className="ml-[7px]" />
            <Tool icon="up" label="上移" className="ml-[6px]" />
            <Tool icon="down" label="下移" gray className="ml-[8px]" />
          </div>
          <div className="flex min-h-0 flex-1">
            <div className="flex w-[166px] shrink-0 flex-col">
              <div className="flex h-[31px] shrink-0 items-end">
                <span className="flex h-[24px] w-[157px] items-center border border-[#888] bg-white pl-[3px] text-[13px] text-[#8c8c8c]">搜索构件...</span>
                <Search className="mb-[6px] ml-[6px] h-[14px] w-[14px] text-[#3d8fd8]" strokeWidth={3} />
              </div>
              <div className="min-h-0 flex-1 overflow-hidden border border-[#9a9a9a] bg-white pt-[3px]">
                {Array.from({ length: 34 }, (_, i) => (
                  <CmpRow key={i} n={30 + i} last={i === 33} />
                ))}
              </div>
            </div>
            <div className="flex min-w-0 flex-1 flex-col">
              <div className="flex h-[22px] shrink-0 items-end bg-white pl-[19px]">
                <span className="flex h-[19px] w-[66px] items-center justify-center border-x border-[#ccc] bg-white">属性编辑</span>
              </div>
              <div className="flex flex-1 justify-end border-t border-[#a5a5a5] bg-[#f5f5f5]">
                <div className="flex w-[21px] flex-col justify-end border-x border-[#d5d5d5] bg-[#f0f0f0]">
                  <ChevronDown className="mb-[8px] ml-[1px] h-[14px] w-[14px] text-[#666]" strokeWidth={2.5} />
                </div>
              </div>
            </div>
          </div>
        </div>
      </div>

      {/* status bar */}
      <div className="flex h-[21px] shrink-0 gap-[2px] py-[1px]">
        <span className="w-[148px] border border-[#d5d5d5] bg-[#f5f5f5]" />
        <span className="flex w-[78px] items-center border border-[#d5d5d5] bg-[#f5f5f5] pl-[1px]">层高<Mono>:2.8m</Mono></span>
        <span className="flex w-[98px] items-center border border-[#d5d5d5] bg-[#f5f5f5] pl-[2px]">底标高<Mono>:20.35m</Mono></span>
        <span className="flex w-[48px] items-center border border-[#d5d5d5] bg-[#f5f5f5] pl-[2px]"><Mono>0</Mono></span>
        <span className="flex w-[914px] items-center border border-[#d5d5d5] bg-[#f5f5f5] pl-[2px]">名称在当前层当前构件类型下不允许重名</span>
        <span className="flex flex-1 items-center border border-[#d5d5d5] bg-[#f5f5f5] pl-[1px]"><Mono>249.1 FPS</Mono></span>
      </div>
      <Taskbar />
      <Dialog />
    </div>
  );
}
